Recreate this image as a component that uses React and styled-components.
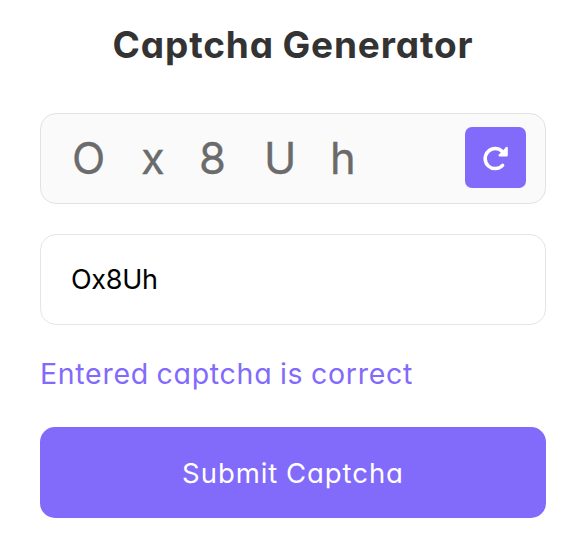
import React, { useState } from "react";
import styled, { createGlobalStyle } from "styled-components";

const GlobalStyle = createGlobalStyle`
  * { box-sizing: border-box; margin: 0; padding: 0; }
  body { background: #fff; font-family: "Inter", "Open Sans", sans-serif; font-feature-settings: "cv11" 1; }
`;

const Container = styled.main`
  width: 587px;
  height: 557px;
  padding: 22px 41px 0 40px;
  background: #fff;
  display: flex;
  flex-direction: column;
`;

const Title = styled.h1`
  height: 46px;
  line-height: 46px;
  font-size: 37px;
  font-weight: 650;
  letter-spacing: 0.85px;
  word-spacing: -1px;
  color: #333;
  text-align: center;
  white-space: nowrap;
`;

const CaptchaBox = styled.div`
  height: 91px;
  margin-top: 45px;
  padding: 0 19px 0 31px;
  display: flex;
  align-items: center;
  justify-content: space-between;
  border: 1px solid #e2e2e2;
  border-radius: 16px;
  background: #fafafa;
`;

const Code = styled.div`
  display: flex;
  padding-bottom: 2px;
  user-select: none;
`;

const Glyph = styled.span`
  width: ${({ $width }) => $width}px;
  font-size: 43.5px;
  line-height: 60px;
  color: #6b6b6b;
  -webkit-text-stroke: 0.3px #6b6b6b;
`;

const RefreshButton = styled.button`
  width: 61px;
  height: 61px;
  margin-bottom: 2px;
  display: grid;
  place-items: center;
  border: 0;
  border-radius: 7px;
  background: #826afb;
  color: #fff;
  cursor: pointer;
`;

const Answer = styled.input`
  height: 91px;
  margin-top: 30px;
  padding: 0 30px;
  border: 1px solid #e5e5e5;
  border-radius: 16px;
  outline: none;
  background: #fff;
  color: #000;
  font-family: inherit;
  font-feature-settings: inherit;
  font-size: 27px;
  letter-spacing: -0.3px;
`;

const Message = styled.p`
  height: 40px;
  margin-top: 29px;
  line-height: 40px;
  font-size: 28.5px;
  letter-spacing: 0.7px;
  word-spacing: -1px;
  color: #826afb;
  white-space: nowrap;
`;

const SubmitButton = styled.button`
  height: 91px;
  margin-top: 33px;
  border: 0;
  border-radius: 15px;
  background: #826afb;
  color: #fff;
  font-family: inherit;
  font-feature-settings: inherit;
  font-size: 27.5px;
  letter-spacing: 0.95px;
  word-spacing: -1px;
  cursor: pointer;
`;

const glyphs = [
  { char: "O", width: 69 },
  { char: "x", width: 58 },
  { char: "8", width: 65 },
  { char: "U", width: 66 },
  { char: "h", width: 30 },
];

function RefreshIcon() {
  return (
    <svg width="28" height="28" viewBox="0 0 28 28" aria-hidden="true">
      <path d="M20.6 21.3A10 10 0 1 1 20.2 7.5" fill="none" stroke="currentColor" strokeWidth="3.5" strokeLinecap="round" />
      <path d="M25.8 3.8V11.3Q25.8 12.6 24.6 12.6H17.4Q15.8 12.1 16.7 10.8L24 3.2Q25.4 2.3 25.8 3.8Z" fill="currentColor" />
    </svg>
  );
}

export default function App() {
  const [value, setValue] = useState("Ox8Uh");
  return (
    <>
      <GlobalStyle />
      <Container>
        <Title>Captcha Generator</Title>
        <CaptchaBox>
          <Code>
            {glyphs.map(({ char, width }) => (
              <Glyph key={char} $width={width}>{char}</Glyph>
            ))}
          </Code>
          <RefreshButton aria-label="Refresh captcha"><RefreshIcon /></RefreshButton>
        </CaptchaBox>
        <Answer value={value} onChange={(e) => setValue(e.target.value)} aria-label="Enter captcha" />
        <Message>Entered captcha is correct</Message>
        <SubmitButton>Submit Captcha</SubmitButton>
      </Container>
    </>
  );
}
